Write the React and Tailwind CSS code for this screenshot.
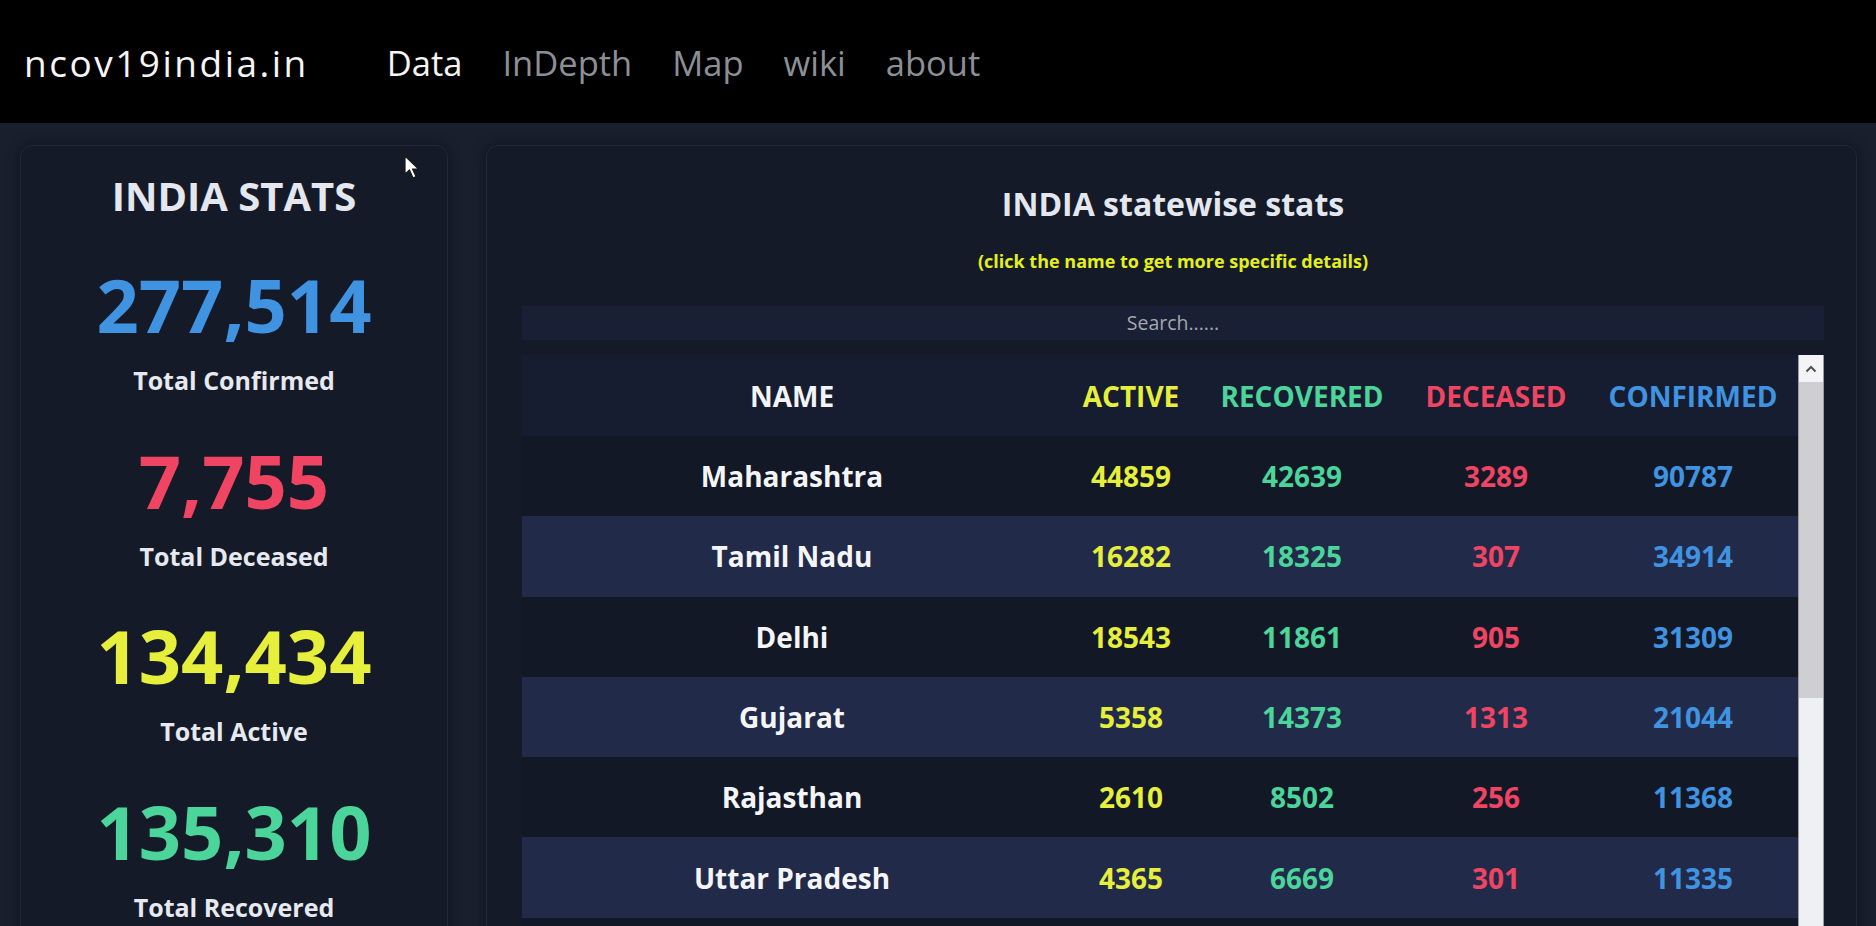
import React from 'react'

const stats = [
  { value: '277,514', label: 'Total Confirmed', color: 'text-[#3f93e0]' },
  { value: '7,755', label: 'Total Deceased', color: 'text-[#ef4562]' },
  { value: '134,434', label: 'Total Active', color: 'text-[#e6ef3b]' },
  { value: '135,310', label: 'Total Recovered', color: 'text-[#4bd59a]' },
]

const states = [
  ['Maharashtra', 44859, 42639, 3289, 90787],
  ['Tamil Nadu', 16282, 18325, 307, 34914],
  ['Delhi', 18543, 11861, 905, 31309],
  ['Gujarat', 5358, 14373, 1313, 21044],
  ['Rajasthan', 2610, 8502, 256, 11368],
  ['Uttar Pradesh', 4365, 6669, 301, 11335],
]

const cols = 'grid grid-cols-[540px_138px_204px_184px_210px] items-center text-center'

function Cursor() {
  return (
    <svg className="absolute left-[404px] top-[155px]" width="18" height="26" viewBox="0 0 18 26">
      <path d="M1 1 L1 19 L5.5 15 L9 23 L12 21.5 L8.5 14 L14.5 14 Z" fill="#ffffff" stroke="#1a1a1a" strokeWidth="1.2" strokeLinejoin="round" />
    </svg>
  )
}

export default function App() {
  return (
    <div className="relative h-[926px] w-full overflow-hidden bg-[#1a1f2e] font-['Open_Sans',sans-serif]">
      <header className="flex h-[123px] items-center bg-black pl-[24px] pt-[3px]">
        <div className="text-[37px] tracking-[2.5px] text-[#f5f5f5]">ncov19india.in</div>
        <nav className="ml-[78px] flex gap-[40px] text-[34.5px]">
          <span className="text-[#f4f4f4]">Data</span>
          <span className="text-[#8c9096]">InDepth</span>
          <span className="text-[#8c9096]">Map</span>
          <span className="text-[#8c9096]">wiki</span>
          <span className="text-[#8c9096]">about</span>
        </nav>
      </header>

      <div className="flex gap-[38px] pl-[20px] pt-[22px]">
        {/* left stats */}
        <section className="h-[900px] w-[428px] rounded-[12px] border border-[#222839] bg-[#151a28] pt-[30px] shadow-[0_0_14px_rgba(0,0,0,0.4)]">
          <h2 className="text-center text-[40px] font-bold leading-none text-[#e4e7ee]">INDIA STATS</h2>
          {stats.map((s, i) => (
            <div key={s.label} className={i === 0 ? 'mt-[52px] text-center' : 'mt-[50.7px] text-center'}>
              <div className={`text-[74px] font-bold leading-none ${s.color}`}>{s.value}</div>
              <div className="mt-[26px] text-[25px] font-bold leading-none text-[#e6e9ef]">{s.label}</div>
            </div>
          ))}
        </section>

        {/* right table */}
        <section className="h-[900px] w-[1371px] rounded-[12px] border border-[#222839] bg-[#151a28] pl-[35px] pr-[32px] pt-[42px] shadow-[0_0_14px_rgba(0,0,0,0.4)]">
          <h2 className="text-center text-[32px] font-bold leading-none text-[#e4e7ee]">INDIA statewise stats</h2>
          <p className="mt-[32px] text-center text-[18px] font-bold leading-none text-[#e4f01e]">
            (click the name to get more specific details)
          </p>
          <div className="mt-[36px] flex h-[34px] items-center justify-center bg-[#191f35] text-[19.5px] text-[#a3a7b0]">
            Search......
          </div>

          <div className="mt-[15px] flex">
            <div className="w-[1276px]">
              <div className={`${cols} h-[81px] bg-[#171d30] text-[28px] font-bold`}>
                <div className="text-[#f2f4f7]">NAME</div>
                <div className="text-[#e6ef3b]">ACTIVE</div>
                <div className="text-[#4bd59a]">RECOVERED</div>
                <div className="text-[#ef4562]">DECEASED</div>
                <div className="text-[#3f93e0]">CONFIRMED</div>
              </div>
              {states.map((r, i) => (
                <div key={r[0]} className={`${cols} h-[80.3px] text-[28px] font-bold ${i % 2 ? 'bg-[#222a4a]' : 'bg-[#131827]'}`}>
                  <div className="text-[#f4f5f8]">{r[0]}</div>
                  <div className="text-[#e6ef3b]">{r[1]}</div>
                  <div className="text-[#4bd59a]">{r[2]}</div>
                  <div className="text-[#ef4562]">{r[3]}</div>
                  <div className="text-[#3f93e0]">{r[4]}</div>
                </div>
              ))}
              <div className="h-[80px] bg-[#131827]" />
            </div>

            {/* scrollbar */}
            <div className="flex w-[27px] flex-col border-x border-[#9a9ca0] bg-[#eef0f3]">
              <div className="flex h-[27px] items-center justify-center bg-[#f4f4f6]">
                <svg width="12" height="8" viewBox="0 0 12 8">
                  <path d="M1.5 6.5 L6 2 L10.5 6.5" fill="none" stroke="#505050" strokeWidth="2" />
                </svg>
              </div>
              <div className="h-[316px] bg-[#cfcfd1]" />
            </div>
          </div>
        </section>
      </div>

      <Cursor />
    </div>
  )
}
